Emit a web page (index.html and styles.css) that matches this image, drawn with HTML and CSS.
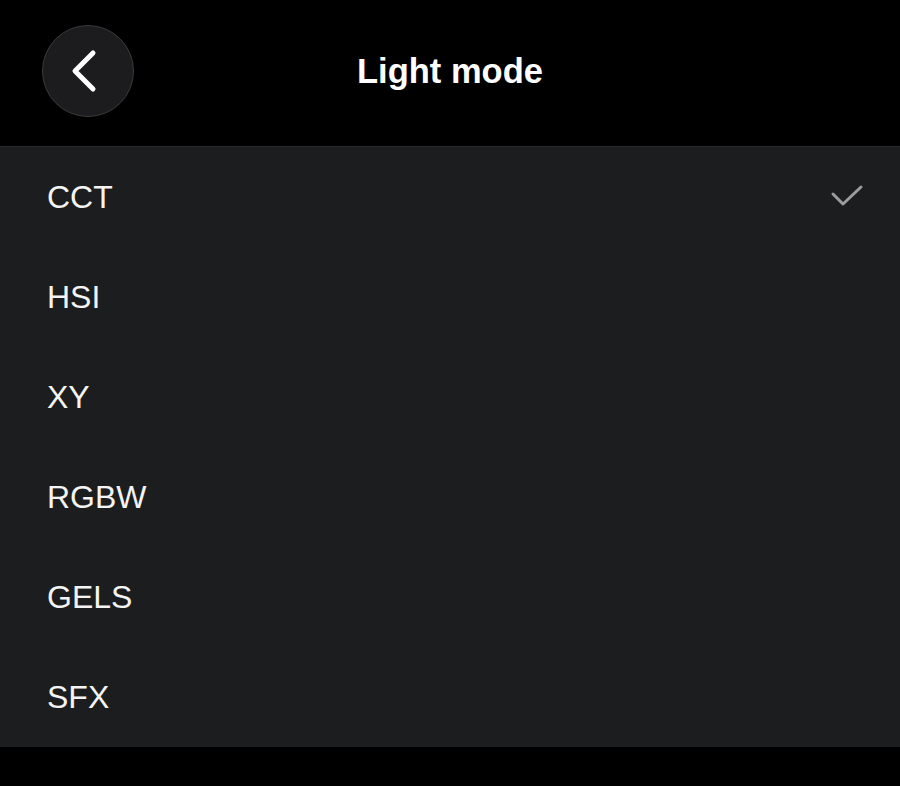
FILE: index.html
```html
<!DOCTYPE html>
<html lang="en">
<head>
    <meta charset="UTF-8">
    <meta name="viewport" content="width=device-width, initial-scale=1.0">
    <title>Light mode</title>
    <link rel="stylesheet" href="styles.css">
</head>
<body>
    <div class="screen">
        <header class="topbar">
            <button class="back-btn" aria-label="Back">
                <svg width="34" height="44" viewBox="0 0 34 44">
                    <path d="M25 4 L7 22 L25 40" fill="none" stroke="#fff" stroke-width="5" stroke-linecap="round" stroke-linejoin="round"/>
                </svg>
            </button>
            <h1>Light mode</h1>
        </header>

        <ul class="mode-list">
            <li class="mode-item selected">
                <span>CCT</span>
                <svg class="check" width="34" height="24" viewBox="0 0 34 24">
                    <path d="M3 10 L13 20 L31 3" fill="none" stroke="#9c9c9e" stroke-width="3" stroke-linecap="round" stroke-linejoin="round"/>
                </svg>
            </li>
            <li class="mode-item"><span>HSI</span></li>
            <li class="mode-item"><span>XY</span></li>
            <li class="mode-item"><span>RGBW</span></li>
            <li class="mode-item"><span>GELS</span></li>
            <li class="mode-item"><span>SFX</span></li>
        </ul>
    </div>
</body>
</html>
```

FILE: styles.css
```css
html, body {
    margin: 0;
    padding: 0;
    background: #000;
}
body {
    font-family: "Liberation Sans", Arial, sans-serif;
    color: #f4f4f4;
}
.screen {
    width: 900px;
    height: 786px;
    overflow: hidden;
}
.topbar {
    height: 146px;
    display: flex;
    align-items: center;
    justify-content: center;
    position: relative;
}
.topbar h1 {
    margin: 0 0 4px;
    font-size: 34.5px;
    font-weight: bold;
    color: #fff;
}
.back-btn {
    position: absolute;
    left: 42px;
    top: 25px;
    width: 92px;
    height: 92px;
    border-radius: 50%;
    background: #1c1c1e;
    border: 1.5px solid #3a3a3c;
    display: flex;
    align-items: center;
    justify-content: center;
    padding: 0 6px 0 0;
    cursor: pointer;
}
.mode-list {
    list-style: none;
    margin: 0;
    padding: 0;
    background: #1c1d1f;
    border-top: 1.5px solid #2a2b2e;
}
.mode-item {
    height: 100px;
    display: flex;
    align-items: center;
    justify-content: space-between;
    padding: 0 36px 0 47px;
    font-size: 32px;
}
.check {
    margin-top: -3px;
}
```
